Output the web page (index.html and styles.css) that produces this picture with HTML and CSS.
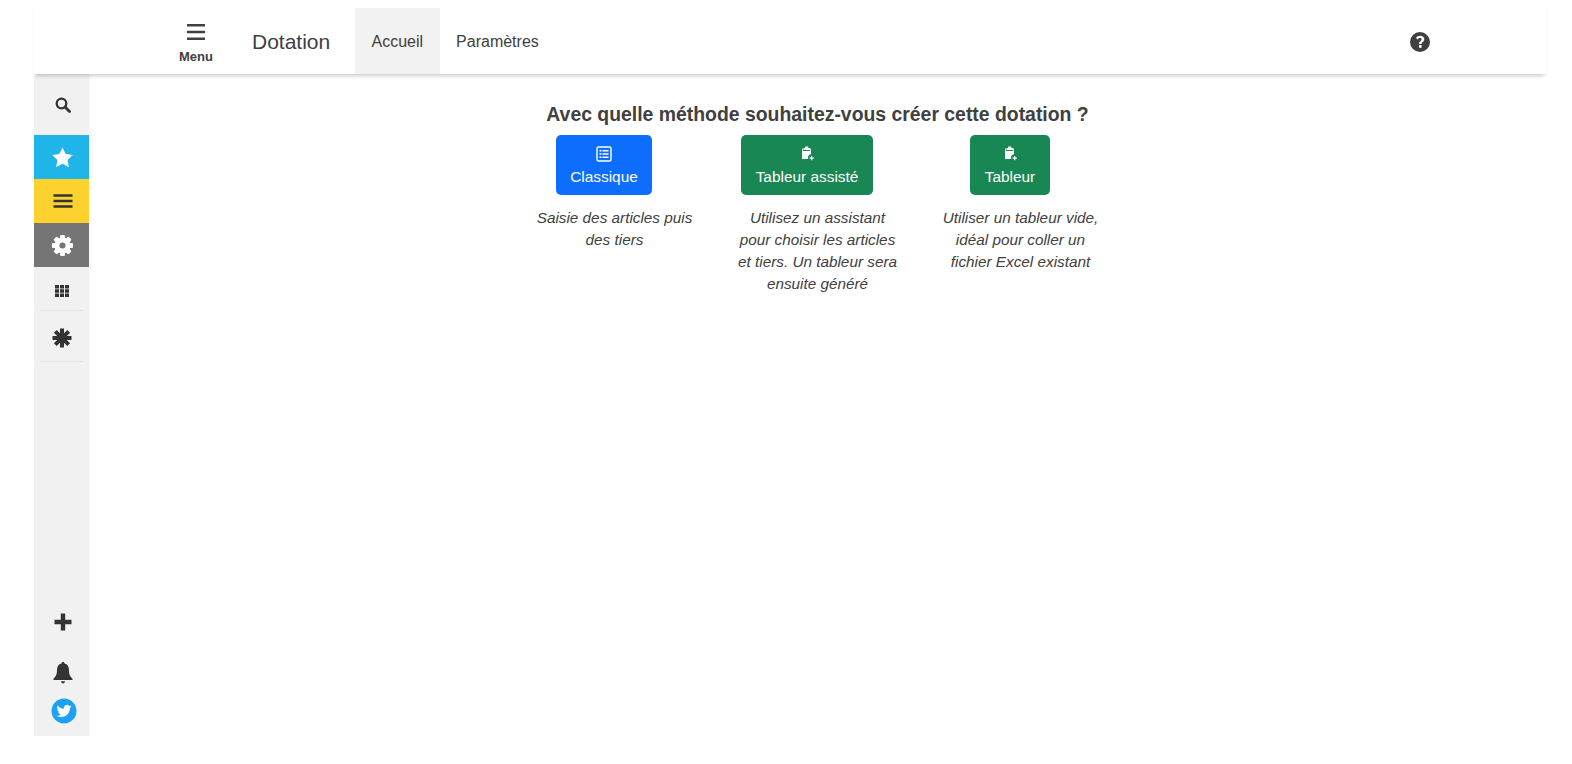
FILE: index.html

```html
<!DOCTYPE html>
<html lang="fr">
<head>
  <meta charset="UTF-8" />
  <meta name="viewport" content="width=device-width, initial-scale=1.0" />
  <title>Dotation</title>
  <link rel="stylesheet" href="styles.css">
</head>
<body>
  <div class="shell">
    <header class="topbar">
      <div class="menu-btn">
        <svg class="menu-icon" viewBox="0 0 18 18"><path d="M0 1h18v2.600H0zM0 7.700h18v2.600H0zM0 14.400h18V17H0z"/></svg>
        <span>Menu</span>
      </div>
      <div class="app-title">Dotation</div>
      <nav class="tabs">
        <a class="tab active">Accueil</a>
        <a class="tab">Paramètres</a>
      </nav>
      <svg class="help" viewBox="0 0 20 20">
        <path fill-rule="evenodd" d="M10 0a10 10 0 1 0 0 20 10 10 0 0 0 0-20zM9 15.800v-2.700h2.600v2.700zM11.600 11.900H9c-.2-2.600 2.600-2.900 2.600-4.500 0-.8-.7-1.300-1.600-1.300-.9 0-1.600.5-2.200 1.400L6 6c.9-1.500 2.300-2.300 4.200-2.300 2.200 0 4.100 1.300 4.100 3.500 0 2.700-2.900 2.700-2.700 4.700z"/>
      </svg>
    </header>

    <div class="content">
      <aside class="sidebar">
        <div class="side-item search">
          <svg viewBox="0 0 16 16" width="16" height="16"><circle cx="6.500" cy="6.500" r="4.800" fill="none" stroke="#333" stroke-width="2.300"/><path d="M10 10l4.500 4.500" stroke="#333" stroke-width="2.800" stroke-linecap="round"/></svg>
        </div>
        <div class="side-item block blue">
          <svg viewBox="0 0 24 24" width="23" height="23"><path fill="#fff" d="M12 1.500l3.300 6.900 7.500 1-5.500 5.200 1.400 7.500L12 18.500l-6.700 3.600 1.400-7.500L1.200 9.400l7.500-1z"/></svg>
        </div>
        <div class="side-item block yellow">
          <svg viewBox="0 0 20 16" width="20" height="16"><path fill="#333" d="M.5 1.300h19v2.400H.5zM.5 6.800h19v2.400H.5zM.5 12.300h19v2.400H.5z"/></svg>
        </div>
        <div class="side-item block gray">
          <svg viewBox="0 0 24 24" width="23" height="23">
            <g fill="#fff">
              <circle cx="12" cy="12" r="8.400"/>
              <rect x="9.500" y="1" width="5" height="22" rx="1"/>
              <rect x="9.500" y="1" width="5" height="22" rx="1" transform="rotate(45 12 12)"/>
              <rect x="9.500" y="1" width="5" height="22" rx="1" transform="rotate(90 12 12)"/>
              <rect x="9.500" y="1" width="5" height="22" rx="1" transform="rotate(135 12 12)"/>
            </g>
            <circle cx="12" cy="12" r="3.200" fill="#757575"/>
          </svg>
        </div>
        <div class="side-item grid-item">
          <svg viewBox="0 0 14 14" width="14" height="14"><path fill="#333" d="M0 1h4v3.400H0zM5 1h4v3.400H5zM10 1h4v3.400h-4zM0 5.300h4v3.400H0zM5 5.300h4v3.400H5zM10 5.300h4v3.400h-4zM0 9.600h4V13H0zM5 9.600h4V13H5zM10 9.600h4V13h-4z"/></svg>
        </div>
        <div class="side-item star-item">
          <svg viewBox="0 0 20 20" width="20" height="20"><path stroke="#333" stroke-width="4" d="M10 .5v19M.5 10h19M3.300 3.300l13.400 13.400M16.700 3.300L3.300 16.700"/></svg>
        </div>

        <div class="side-bottom">
          <div class="side-item add">
            <svg viewBox="0 0 18 18" width="18" height="18"><path fill="#333" d="M6.800 0.500h4.400v6.300h6.300v4.400h-6.300v6.300H6.800v-6.300H.5V6.800h6.300z"/></svg>
          </div>
          <div class="side-item bell">
            <svg viewBox="0 0 20 22" width="20" height="22"><path fill="#333" d="M10 0c1 0 1.500.7 1.500 1.600C14.600 2.300 16 5 16 8c0 5 1.500 6.500 3.500 8.800V18H.5v-1.200C2.500 14.500 4 13 4 8c0-3 1.400-5.700 4.500-6.400C8.500.7 9 0 10 0zM8 19.200h4c0 1.200-.9 2.300-2 2.300s-2-1.100-2-2.300z"/></svg>
          </div>
          <div class="side-item twitter">
            <svg viewBox="0 0 26 26" width="26" height="26">
              <circle cx="13" cy="13" r="12.500" fill="#1da1f2"/>
              <path fill="#fff" transform="translate(5.500 5.500) scale(.625)" d="M23.953 4.570a10 10 0 01-2.825.775 4.958 4.958 0 002.163-2.723c-.951.555-2.005.959-3.127 1.184a4.920 4.920 0 00-8.384 4.482C7.690 8.095 4.067 6.130 1.640 3.162a4.822 4.822 0 00-.666 2.475c0 1.710.870 3.213 2.188 4.096a4.904 4.904 0 01-2.228-.616v.060a4.923 4.923 0 003.946 4.827 4.996 4.996 0 01-2.212.085 4.936 4.936 0 004.604 3.417 9.867 9.867 0 01-6.102 2.105c-.390 0-.779-.023-1.170-.067a13.995 13.995 0 007.557 2.209c9.053 0 13.998-7.496 13.998-13.985 0-.210 0-.420-.015-.630A9.935 9.935 0 0024 4.590z"/>
            </svg>
          </div>
        </div>
      </aside>

      <main class="main">
        <h1>Avec quelle méthode souhaitez-vous créer cette dotation ?</h1>
        <div class="choices">
          <div class="choice">
            <a class="btn btn-blue">
              <svg viewBox="0 0 16 16" width="16" height="16"><rect x="1" y="1" width="14" height="14" rx="1.500" fill="none" stroke="#fff" stroke-width="1.400"/><path fill="#fff" d="M3.500 4h2v1.500h-2zM6.500 4h6v1.500h-6zM3.500 7.200h2v1.500h-2zM6.500 7.200h6v1.500h-6zM3.500 10.400h2v1.500h-2zM6.500 10.400h6v1.500h-6z"/></svg>
              Classique
            </a>
            <p>Saisie des articles puis des tiers</p>
          </div>
          <div class="choice">
            <a class="btn btn-green">
              <svg viewBox="0 0 16 16" width="16" height="16"><path fill="#fff" d="M6.500 .5h2.500l.6 1.500h1.400v2H4.500V2h1.400zM3 2.500h.8V5h7.400V2.500h.8v5.800c-1.700 0-3 1.300-3 3.200v1.500H3z"/><path fill="#fff" d="M12 10h1.300v1.500h1.500v1.200h-1.500v1.500H12v-1.500h-1.500v-1.200H12z"/></svg>
              Tableur assisté
            </a>
            <p>Utilisez un assistant pour choisir les articles et tiers. Un tableur sera ensuite généré</p>
          </div>
          <div class="choice">
            <a class="btn btn-green">
              <svg viewBox="0 0 16 16" width="16" height="16"><path fill="#fff" d="M6.500 .5h2.500l.6 1.500h1.400v2H4.500V2h1.400zM3 2.500h.8V5h7.400V2.500h.8v5.800c-1.700 0-3 1.300-3 3.200v1.500H3z"/><path fill="#fff" d="M12 10h1.300v1.500h1.500v1.200h-1.500v1.500H12v-1.500h-1.500v-1.200H12z"/></svg>
              Tableur
            </a>
            <p>Utiliser un tableur vide, idéal pour coller un fichier Excel existant</p>
          </div>
        </div>
      </main>
    </div>
  </div>
</body>
</html>
```

FILE: styles.css

```css
:root {
  --text: #404040;
  --side-bg: #f1f1f1;
  --line: #e2e2e2;
}

* {
  box-sizing: border-box;
}

body {
  margin: 0;
  background: #fff;
  color: var(--text);
  font-family: "Liberation Sans", Arial, sans-serif;
}

.shell {
  display: flex;
  flex-direction: column;
  height: 736px;
  margin: 0 26px 0 34px;
}

/* top bar */
.topbar {
  position: relative;
  z-index: 2;
  display: flex;
  align-items: center;
  flex: 0 0 74px;
  padding: 8px 116px 0 143px;
  box-shadow: 0 4px 4px -2px rgba(0, 0, 0, 0.2);
  background: #fff;
}

.menu-btn {
  display: flex;
  flex-direction: column;
  align-items: center;
  width: 38px;
  margin: 4px 37px 0 0;
  font-size: 13px;
  font-weight: bold;
  line-height: 15px;
}

.menu-icon {
  width: 18px;
  height: 18px;
  margin-bottom: 8px;
  fill: var(--text);
}

.app-title {
  width: 103px;
  padding-top: 2px;
  font-size: 21px;
}

.tabs {
  display: flex;
  align-self: stretch;
  font-size: 16px;
}

.tab {
  display: flex;
  align-items: center;
  padding: 2px 16.500px 0;
}

.tab.active {
  background: #f2f2f2;
}

.help {
  width: 20px;
  height: 20px;
  margin: 2px 0 0 auto;
  fill: var(--text);
}

/* sidebar */
.content {
  display: flex;
  flex: 1;
  min-height: 0;
}

.sidebar {
  display: flex;
  flex-direction: column;
  width: 55px;
  background: var(--side-bg);
  box-shadow: 2px 0 4px rgba(0, 0, 0, 0.03);
}

.side-item {
  display: flex;
  align-items: center;
  justify-content: center;
  flex: none;
  padding-left: 2px;
}

.search {
  height: 61px;
}

.block {
  height: 44px;
}

.blue {
  background: #1fb5e8;
}

.yellow {
  background: #fdd22f;
}

.gray {
  background: #757575;
}

.grid-item,
.star-item {
  margin: 0 6px 0 5px;
  border-bottom: 1px solid var(--line);
}

.grid-item {
  height: 44px;
  padding-top: 4px;
}

.star-item {
  height: 51px;
  padding-top: 3px;
}

.side-bottom {
  margin-top: auto;
  padding-bottom: 10px;
}

.add {
  height: 56px;
}

.bell {
  height: 46px;
}

.twitter {
  height: 30px;
  padding-left: 4px;
}

/* main area */
.main {
  flex: 1;
  padding-top: 27px;
  text-align: center;
}

h1 {
  margin: 0;
  font-size: 19.400px;
  font-weight: bold;
  line-height: 26px;
}

.choices {
  display: flex;
  justify-content: center;
  margin-top: 8px;
}

.choice {
  width: 203px;
  padding: 0 19px;
}

.btn {
  display: inline-flex;
  flex-direction: column;
  align-items: center;
  height: 60px;
  margin: 0 21px 0 0;
  padding: 11px 14.500px 0;
  border-radius: 5px;
  color: #fff;
  font-size: 15.400px;
  line-height: 20px;
}

.btn svg {
  margin-bottom: 5px;
}

.btn-blue {
  background: #0d6efd;
}

.btn-green {
  background: #198754;
}

.choice p {
  margin: 12px 0 0;
  font-size: 15.300px;
  font-style: italic;
  line-height: 22px;
}
```
